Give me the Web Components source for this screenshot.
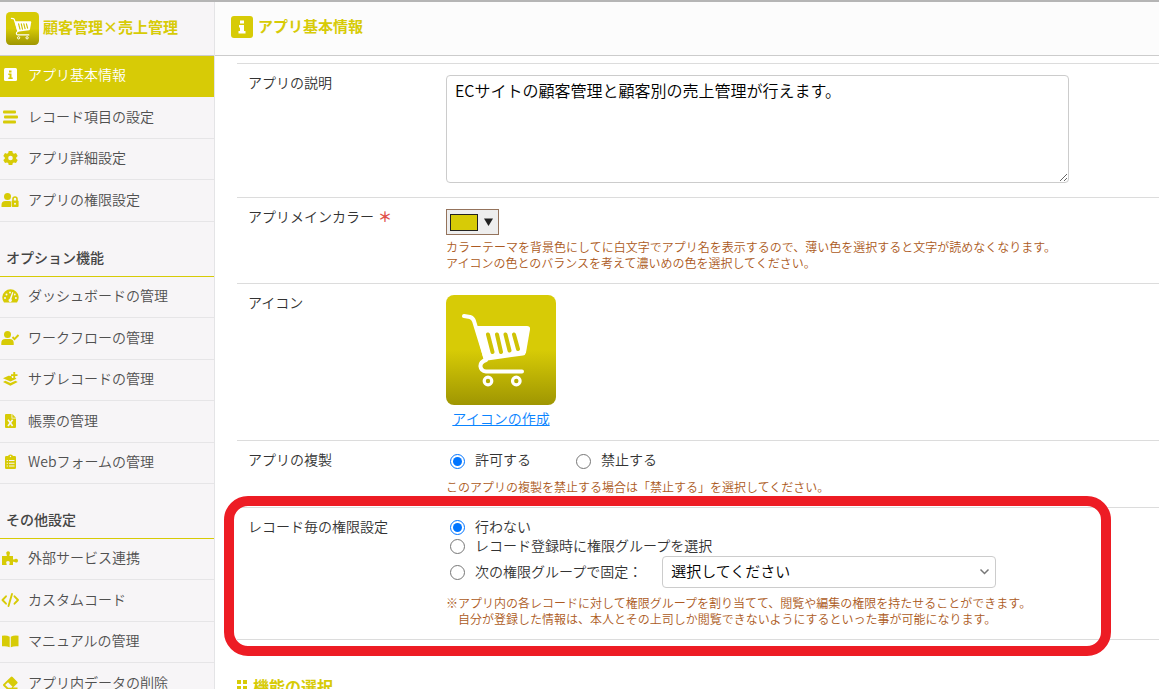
<!DOCTYPE html>
<html lang="ja">
<head>
<meta charset="utf-8">
<meta name="viewport" content="width=device-width, initial-scale=1">
<title>アプリ基本情報</title>
<style>
  html, body { margin: 0; height: 100%; }
  body {
    --accent: #d7cb06;
    --side-bg: #f7f5f7;
    --rule: #dcdcdc;
    --note: #ac5a22;
    font: 350 14px/20px "Noto Sans CJK JP", "Noto Sans", sans-serif;
    color: #333;
    background: #fff;
  }
</style>
</head>
<body>
<app-settings></app-settings>
<script>
const define = (name, html, setup) => {
  const tpl = document.createElement('template');
  tpl.innerHTML = html;
  customElements.define(name, class extends HTMLElement {
    constructor() {
      super();
      this.attachShadow({ mode: 'open' }).append(tpl.content.cloneNode(true));
    }
    connectedCallback() { if (setup) setup(this, this.shadowRoot); }
  });
};

/* Icon shapes, each on a 20 x 16 grid. */
const ICONS = {
  info: '<rect x="4" y="1" width="13" height="13" rx="1.5"/><path class="h" d="M9 3.5h2.5v2H9zM8.300 6.500h3.200v4h1.200v1.500H8.300v-1.500h1.200V8H8.300z"/>',
  list: '<rect x="3" y="1.500" width="13" height="3" rx="1"/><rect x="4" y="6.500" width="14" height="3" rx="1"/><rect x="3" y="11.500" width="13" height="3" rx="1"/>',
  gear: '<path d="M8.700 1h3.600l.5 2 1.200.7 2-.6 1.700 2.900-1.500 1.400v1.300l1.500 1.400-1.700 2.900-2-.6-1.200.7-.5 1.900H8.700l-.5-1.900-1.200-.7-2 .6-1.700-2.900 1.500-1.400V7.400L3.300 6 5 3.100l2 .6 1.200-.7z"/><circle class="h" cx="10.500" cy="8" r="2.300"/>',
  userlock: '<circle cx="7.500" cy="4.500" r="3.500"/><path d="M1.500 15v-2a4 4 0 0 1 4-4h4q1 0 1.500.4V15z"/><path fill="none" stroke="currentColor" stroke-width="1.600" d="M13 9V7a2 2 0 0 1 4 0v2"/><rect x="11.600" y="8.500" width="7" height="6.500" rx="1"/><circle class="h" cx="15" cy="11.700" r="1"/>',
  gauge: '<path d="M4 14.500A8.200 8.200 0 1 1 17 14.500z"/><path class="h" d="M9.700 10.700 12.300 4l1.100.4-2 6.700a1.700 1.700 0 1 1-1.700-.4z"/><circle class="h" cx="5" cy="10" r="1"/><circle class="h" cx="6.500" cy="6.500" r="1"/><circle class="h" cx="10" cy="4.500" r="1"/><circle class="h" cx="15.900" cy="10" r="1"/><circle class="h" cx="14.800" cy="6.500" r=".9"/>',
  usercheck: '<circle cx="7.500" cy="4.500" r="3.500"/><path d="M1.300 15v-2a4 4 0 0 1 4-4h4.400a4 4 0 0 1 4 4v2z"/><path fill="none" stroke="currentColor" stroke-width="1.900" d="m12.500 7 2 2.200L18.500 5"/>',
  layers: '<path d="M3 7.300 8.500 4.800l3 .2.500 2h3.500l1 .7-6.100 2.900z"/><path d="m3 11 2.300-1.200 5.100 2.300 5.100-2.300 2.200 1.200-7.300 3.700z"/><path d="M13.300 1h1.900v2.200h2.300v1.900h-2.300v2.200h-1.900V5.100H11V3.200h2.300z"/>',
  excel: '<path d="M5 2a1 1 0 0 1 1-1h5.500v4.500H16V14a1 1 0 0 1-1 1H6a1 1 0 0 1-1-1z"/><path d="M12.300 1 16 4.700h-3.700z"/><path class="s" d="m8 6.700 4.600 6.300M12.600 6.700 8 13"/>',
  clip: '<rect x="5" y="2" width="11" height="13" rx="1.200"/><path d="M8 2.500A2.500 2 0 0 1 13 2.500V4.500H8z"/><circle class="h" cx="10.500" cy="2.500" r=".7"/><path class="h" d="M6.700 6h1.200v1H6.700zM9 6h5.500v1H9zM6.700 8.700h1.200v1H6.700zM9 8.700h5.500v1H9zM6.700 11.400h1.200v1H6.700zM9 11.400h5.500v1H9z"/>',
  puzzle: '<path d="M2 6h4.700q.5-.8-.2-1.800C5.700 2 7 1.200 8 1.200s2.600.8 1.700 3c-.6 1-.3 1.500 0 1.800H13v3.300c.8.600 1.600.2 2.200-.2 1.500-.9 2.800.2 2.800 1.600s-1.300 2.400-2.800 1.500c-.7-.5-1.500-.7-2.200-.1V15H9.500c-.5-.8 0-1.300.2-1.800C10.200 11.700 9 11 8 11s-2.300.7-1.700 2.200c.3.500.7 1 .2 1.800H2z"/>',
  code: '<path fill="none" stroke="currentColor" stroke-width="1.900" stroke-linecap="round" stroke-linejoin="round" d="M6 4.300 2.500 8 6 11.700M14.500 4.300 18 8l-3.500 3.700M12 2 8.500 14"/>',
  book: '<path d="M2 2.700q4.500-.8 7.700 1v10.600Q6.500 12.700 2 13.300zM18.500 2.700q-4.500-.8-7.700 1v10.600q3.200-1.600 7.700-1z"/>',
  eraser: '<path d="m3.500 9 7.300-7a1.300 1.300 0 0 1 1.800 0l4.600 4.700a1.300 1.300 0 0 1 0 1.800L13 12.600h4.500v1.900H7.200L3.500 10.900a1.300 1.300 0 0 1 0-1.900z"/><path class="h" d="m8 7.300 4.500 4.500-1 1H8.200L5.200 10z"/>',
  grip: '<path d="M5 2h4v4H5zM11 2h4v4h-4zM5 8h4v4H5zM11 8h4v4h-4zM5 14h4v2H5zM11 14h4v2h-4z"/>'
};

define('ui-icon', `
  <style>
    :host { display: inline-flex; flex: none; width: 20px; height: 16px; }
    svg { width: 100%; height: 100%; fill: currentColor; overflow: visible; }
    .h { fill: var(--icon-hole, #fff); }
    .s { fill: none; stroke: var(--icon-hole, #fff); stroke-width: 1.6; }
  </style>
  <svg viewBox="0 0 20 16" aria-hidden="true"></svg>`,
  (el, root) => { root.querySelector('svg').innerHTML = ICONS[el.getAttribute('name')] || ''; });

define('cart-tile', `
  <style>
    :host { display: block; flex: none; width: 110px; height: 110px; }
    svg { display: block; width: 100%; height: 100%; }
  </style>
  <svg viewBox="0 0 110 110" role="img" aria-label="カート">
    <defs><linearGradient id="g" x2="0" y2="1">
      <stop offset=".5" stop-color="#d7cb06"/><stop offset="1" stop-color="#9f9602"/>
    </linearGradient></defs>
    <rect class="bg" width="110" height="110" rx="8" fill="url(#g)"/>
    <path fill="none" stroke="#fff" stroke-width="4" stroke-linecap="round" stroke-linejoin="round"
      d="M18 21 24 22Q27 23 28 26L40 65Q34 67 34.500 71.500T40 76.500H76"/>
    <path fill="#fff" d="M29 31H81Q84.500 31 84 34.500L80 57.500Q79.500 60 77 60.500L38 66z"/>
    <path fill="none" stroke="#cfc305" stroke-width="4" stroke-linecap="round"
      d="m42 39.500 4.500 17.500M51 39.500 55 57M59.500 39.500l4 16M68 39.500 72 54"/>
    <g fill="none" stroke="#fff" stroke-width="3.200"><circle cx="42" cy="86" r="3.800"/><circle cx="70.300" cy="86" r="3.800"/></g>
  </svg>`,
  (el, root) => { if (el.hasAttribute('small')) root.querySelector('.bg').setAttribute('rx', '14'); });

define('app-brand', `
  <style>
    :host { display: flex; align-items: center; gap: 4px; height: 53px; padding-left: 6px;
      border-bottom: 1px solid #ccc; color: var(--accent); font-size: 15px; font-weight: 700; white-space: nowrap; }
    cart-tile { width: 33px; height: 33px; }
    span { padding-bottom: 4px; }
  </style>
  <cart-tile small></cart-tile><span><slot></slot></span>`);

define('nav-group', `
  <style>
    :host { display: block; }
    h2 { margin: 0; padding: 25px 6px 8px; border-bottom: 1px solid var(--accent);
      font-size: 14px; line-height: 21px; font-weight: 500; color: #444; }
    h2[hidden] { display: none; }
    ::slotted(nav-item) { height: 42px; }
    ::slotted(nav-item:nth-child(odd)) { height: 41px; }
  </style>
  <h2></h2><slot></slot>`,
  (el, root) => {
    const h = root.querySelector('h2');
    h.textContent = el.getAttribute('heading') || '';
    h.hidden = !h.textContent;
  });

define('nav-item', `
  <style>
    :host { display: block; box-sizing: border-box; border-bottom: 1px solid #e6e5e7; --icon-hole: var(--side-bg); }
    a { display: flex; align-items: center; gap: 8px; height: 100%; box-sizing: border-box; padding-bottom: 2px;
      color: #505050; text-decoration: none; white-space: nowrap; }
    span { padding-bottom: 2px; }
    ui-icon { color: var(--accent); }
    :host([current]) { background: var(--accent); border-color: var(--accent); --icon-hole: var(--accent); }
    :host([current]) a, :host([current]) ui-icon { color: #fff; }
  </style>
  <a href="#"><ui-icon></ui-icon><span><slot></slot></span></a>`,
  (el, root) => {
    const icon = document.createElement('ui-icon');
    icon.setAttribute('name', el.getAttribute('icon'));
    root.querySelector('ui-icon').replaceWith(icon);
    if (el.hasAttribute('current')) root.querySelector('a').setAttribute('aria-current', 'page');
  });

define('page-header', `
  <style>
    :host { display: flex; align-items: center; height: 53px; box-sizing: content-box; padding-left: 16px;
      border-bottom: 1px solid #ccc; background: #fcfcfc; color: var(--accent); }
    svg { width: 22px; height: 22px; margin-right: 5px; }
    h1 { margin: 0; padding-bottom: 2px; font-size: 15px; line-height: 20px; font-weight: 700; }
    div { display: flex; align-items: center; padding-bottom: 4px; }
  </style>
  <div>
    <svg viewBox="0 0 22 22" aria-hidden="true"><rect width="22" height="22" rx="3" fill="currentColor"/>
      <path fill="#fff" d="M9 4.500h4v3H9zM8 9h5v6h1.500v2.500H7.500V15H9v-3.500H8z"/></svg>
    <h1><slot></slot></h1>
  </div>`);

define('form-row', `
  <style>
    :host { display: grid; grid-template-columns: 198px minmax(0, 1fr); position: relative;
      padding-left: 11px; border-top: 1px solid var(--rule); }
    :host(:last-of-type) { border-bottom: 1px solid var(--rule); }
    .label { padding-top: 8px; }
    .body { display: flex; flex-direction: column; align-items: flex-start; padding: 11px 0; }
    .mark { display: none; }
    :host([highlight]) .mark { display: block; position: absolute; inset: -12px 48px -17px -13px;
      box-sizing: border-box; border: 10px solid #ed1c24; border-radius: 24px; pointer-events: none; }
  </style>
  <div class="label"><slot name="label"></slot></div>
  <div class="body"><slot></slot></div>
  <div class="mark"></div>`);

define('help-note', `
  <style>
    :host { display: block; margin-bottom: 1px; font-size: 12px; line-height: 16px; color: var(--note); }
    :host([marked]) { padding-left: 12px; }
    :host([marked])::before { content: "※"; float: left; margin-left: -12px; }
  </style>
  <slot></slot>`);

define('color-button', `
  <style>
    :host { display: block; }
    button { display: flex; align-items: center; gap: 6px; box-sizing: border-box; width: 53px; height: 26px; margin: 0;
      padding: 0 0 0 3px; border: 1px solid #94735c; border-radius: 0; background: #eee; color: #222; }
    span { box-sizing: border-box; width: 28px; height: 17px; border: 1px solid #222; background: var(--accent); }
    svg { width: 9px; height: 8px; fill: currentColor; }
  </style>
  <button type="button" aria-label="アプリメインカラー"><span></span><svg viewBox="0 0 9 8"><path d="M0 .5h9L4.500 8z"/></svg></button>`);

define('app-settings', `
  <style>
    :host { display: grid; grid-template-columns: 214px minmax(0, 1fr); height: 100vh; box-sizing: border-box;
      border-top: 2px solid #b5b5b5; }
    aside { min-height: 0; overflow: hidden; background: var(--side-bg); }
    main { display: flex; flex-direction: column; min-height: 0; border-left: 1px solid #e4e4e6; }
    form { flex: 1; min-height: 0; overflow: hidden auto; scrollbar-width: none; padding: 7px 0 0 22px; }
    textarea { box-sizing: border-box; width: 100%; max-width: 623px; height: 108px; margin: 0 0 3px; padding: 4px 8px;
      border: 1px solid #ccc; border-radius: 4px; background: #fff; color: #000; font: inherit; font-size: 16px; line-height: 20px; }
    textarea:focus { outline: none; }
    .req { color: #e0504a; margin-left: 4px; font-weight: 700; }
    color-button { margin-bottom: 4px; }
    .tile { display: flex; flex-direction: column; align-items: center; gap: 3px; padding-bottom: 1px; }
    .tile a { color: #0a84ff; text-decoration: underline; }
    .options { display: flex; gap: 41px; padding-bottom: 8px; }
    .options, .stack { margin-top: -1px; line-height: 17px; }
    .stack { display: flex; flex-direction: column; padding-bottom: 7px; }
    .pick { display: flex; align-items: center; gap: 20px; }
    label.radio { display: flex; align-items: center; gap: 10px; padding-left: 4px; white-space: nowrap; }
    .radio span { padding-bottom: 2px; }
    .options span { padding-bottom: 3px; }
    input { width: 15px; height: 15px; margin: 0; }
    .select { position: relative; width: 334px; }
    select { appearance: none; display: block; box-sizing: border-box; width: 100%; height: 32px; margin: 0; padding: 0 24px 4px 8px;
      border: 1px solid #ccc; border-radius: 4px; background: #fff; color: #000; font: inherit; font-size: 15px; }
    .select svg { position: absolute; right: 6px; top: 12px; width: 11px; height: 8px; fill: none; stroke: #777; stroke-width: 1.5; pointer-events: none; }
    h2 { display: flex; align-items: center; margin: 34px 0 16px -5px; font-size: 16px; line-height: 24px; font-weight: 700; color: var(--accent); }
    h2 ui-icon { margin-right: 1px; }
  </style>
  <aside>
    <app-brand>顧客管理×売上管理</app-brand>
    <nav>
      <nav-group>
        <nav-item icon="info" current>アプリ基本情報</nav-item>
        <nav-item icon="list">レコード項目の設定</nav-item>
        <nav-item icon="gear">アプリ詳細設定</nav-item>
        <nav-item icon="userlock">アプリの権限設定</nav-item>
      </nav-group>
      <nav-group heading="オプション機能">
        <nav-item icon="gauge">ダッシュボードの管理</nav-item>
        <nav-item icon="usercheck">ワークフローの管理</nav-item>
        <nav-item icon="layers">サブレコードの管理</nav-item>
        <nav-item icon="excel">帳票の管理</nav-item>
        <nav-item icon="clip">Webフォームの管理</nav-item>
      </nav-group>
      <nav-group heading="その他設定">
        <nav-item icon="puzzle">外部サービス連携</nav-item>
        <nav-item icon="code">カスタムコード</nav-item>
        <nav-item icon="book">マニュアルの管理</nav-item>
        <nav-item icon="eraser">アプリ内データの削除</nav-item>
      </nav-group>
    </nav>
  </aside>
  <main>
    <page-header>アプリ基本情報</page-header>
    <form>
      <form-row>
        <label slot="label" for="desc">アプリの説明</label>
        <textarea id="desc" spellcheck="false">ECサイトの顧客管理と顧客別の売上管理が行えます。</textarea>
      </form-row>
      <form-row>
        <span slot="label">アプリメインカラー<span class="req">＊</span></span>
        <color-button></color-button>
        <help-note>カラーテーマを背景色にしてに白文字でアプリ名を表示するので、薄い色を選択すると文字が読めなくなります。<br>アイコンの色とのバランスを考えて濃いめの色を選択してください。</help-note>
      </form-row>
      <form-row>
        <span slot="label">アイコン</span>
        <div class="tile"><cart-tile></cart-tile><a href="#">アイコンの作成</a></div>
      </form-row>
      <form-row>
        <span slot="label">アプリの複製</span>
        <div class="options">
          <label class="radio"><input type="radio" name="copy" checked><span>許可する</span></label>
          <label class="radio"><input type="radio" name="copy"><span>禁止する</span></label>
        </div>
        <help-note>このアプリの複製を禁止する場合は「禁止する」を選択してください。</help-note>
      </form-row>
      <form-row highlight>
        <span slot="label">レコード毎の権限設定</span>
        <div class="stack">
          <label class="radio"><input type="radio" name="perm" checked><span>行わない</span></label>
          <label class="radio"><input type="radio" name="perm"><span>レコード登録時に権限グループを選択</span></label>
          <div class="pick">
            <label class="radio"><input type="radio" name="perm"><span>次の権限グループで固定：</span></label>
            <div class="select">
              <select aria-label="権限グループ"><option>選択してください</option></select>
              <svg viewBox="0 0 11 8" aria-hidden="true"><path d="m1.500 1.500 4 4 4-4"/></svg>
            </div>
          </div>
        </div>
        <help-note marked>アプリ内の各レコードに対して権限グループを割り当てて、閲覧や編集の権限を持たせることができます。<br>自分が登録した情報は、本人とその上司しか閲覧できないようにするといった事が可能になります。</help-note>
      </form-row>
      <h2><ui-icon name="grip"></ui-icon>機能の選択</h2>
    </form>
  </main>`);
</script>
</body>
</html>
